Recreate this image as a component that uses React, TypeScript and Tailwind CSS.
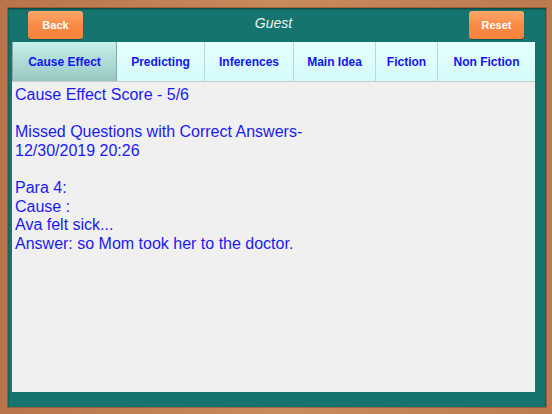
import React from 'react';

const tabs = [
  { label: 'Cause Effect', width: 'w-[105px]', active: true },
  { label: 'Predicting', width: 'w-[88px]' },
  { label: 'Inferences', width: 'w-[89px]' },
  { label: 'Main Idea', width: 'w-[82px]' },
  { label: 'Fiction', width: 'w-[62px]' },
  { label: 'Non Fiction', width: 'flex-1' },
];

const lines = [
  'Cause Effect Score - 5/6',
  '',
  'Missed Questions with Correct Answers-',
  '12/30/2019 20:26',
  '',
  'Para 4:',
  'Cause :',
  'Ava felt sick...',
  'Answer: so Mom took her to the doctor.',
];

function OrangeButton({ children }: { children: React.ReactNode }) {
  return (
    <button className="h-[28px] w-[55px] rounded-[3px] bg-gradient-to-b from-[#ffa86c] via-[#f98a45] to-[#f7823c] text-[11px] font-bold text-white shadow-[0_1px_1px_rgba(0,0,0,0.25)]">
      {children}
    </button>
  );
}

export default function App() {
  return (
    <div
      className="flex h-[414px] w-[552px] bg-gradient-to-r from-[#b9734a] via-[#c98a5c] to-[#bd7a4f] pt-[8px] pb-[7px] pl-[8px] pr-[6px]"
      style={{ fontFamily: '"Liberation Sans", Arial, sans-serif' }}
    >
      <div className="flex flex-1 flex-col bg-[#15756e] pl-[4px] pr-[11px] pb-[15px] shadow-[inset_0_1px_2px_rgba(0,0,0,0.5),0_0_0_1px_rgba(90,45,20,0.35)]">
        {/* header */}
        <div className="relative flex h-[34px] items-start justify-between pl-[16px] pr-[11px] pt-[3px]">
          <OrangeButton>Back</OrangeButton>
          <div className="absolute left-0 right-0 top-[5px] text-center text-[14px] italic text-[#e8f4f2]">
            Guest
          </div>
          <OrangeButton>Reset</OrangeButton>
        </div>

        {/* tabs */}
        <div className="flex h-[40px] border-b border-[#c4cccc]">
          {tabs.map((t) => (
            <div
              key={t.label}
              className={`flex items-center justify-center border-r pt-[1px] text-[12px] font-bold text-[#1414f0] last:border-r-0 ${t.width} ${
                t.active
                  ? 'border-l border-[#8aa8a6] bg-gradient-to-b from-[#c6f0ec] to-[#98c8c3]'
                  : 'border-[#c2d4d4] bg-gradient-to-b from-[#e6ffff] to-[#d4fbfb]'
              }`}
            >
              {t.label}
            </div>
          ))}
        </div>

        {/* content */}
        <div className="flex-1 bg-[#f0f0f0] pl-[3px] pt-[4px] text-[16px] leading-[18.6px] text-[#1a1af0]">
          {lines.map((l, i) => (
            <div key={i} className="h-[18.6px] whitespace-pre">
              {l}
            </div>
          ))}
        </div>
      </div>
    </div>
  );
}
